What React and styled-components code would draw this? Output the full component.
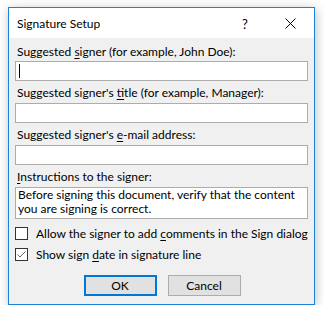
import React from "react";
import styled, { createGlobalStyle } from "styled-components";

const Global = createGlobalStyle`
  html, body { margin: 0; padding: 0; background: #ffffff; }
  body { font-family: Lato, "Noto Sans", sans-serif; font-size: 12px; color: #000; }
`;

const Dialog = styled.div`
  margin: 7px 0 0 8px;
  width: 307px;
  height: 298px;
  box-sizing: border-box;
  border: 1px solid #1a82d8;
  background: #f0f0f0;
  box-shadow: 1px 2px 10px rgba(0, 0, 0, 0.26);
  display: flex;
  flex-direction: column;
`;

const TitleBar = styled.div`
  height: 30px;
  background: #ffffff;
  display: flex;
  align-items: center;
  padding: 0 0 0 8px;
`;

const Title = styled.div`
  flex: 1;
  font-size: 12px;
  line-height: 16px;
  padding-top: 1px;
`;

const Help = styled.div`
  width: 12px;
  font-size: 13px;
  line-height: 16px;
  margin-right: 31px;
  padding-top: 1px;
`;

const CloseIcon = styled.svg`
  width: 11px;
  height: 11px;
  margin-right: 18px;
  margin-top: 1px;
`;

const Body = styled.div`
  padding: 6px 6px 0 6px;
  display: flex;
  flex-direction: column;
`;

const Label = styled.div`
  padding-left: 2px;
  line-height: 16px;
  margin-top: ${(p) => p.$mt || 0}px;
  white-space: nowrap;
`;

const U = styled.span`
  text-decoration: underline;
  text-underline-offset: 2px;
`;

const Input = styled.div`
  margin-top: ${(p) => p.$mt || 2}px;
  height: 20px;
  box-sizing: border-box;
  border: 1px solid #acacac;
  background: #ffffff;
  position: relative;
`;

const Caret = styled.div`
  position: absolute;
  left: 3px;
  top: 2px;
  width: 1px;
  height: 14px;
  background: #000;
`;

const TextArea = styled.div`
  margin-top: 2px;
  height: 32px;
  box-sizing: border-box;
  border: 1px solid #acacac;
  background: #ffffff;
  padding: 0 2px;
  line-height: 14px;
  font-size: 12px;
`;

const CheckRow = styled.div`
  display: flex;
  align-items: center;
  margin-top: 8px;
  height: 13px;
`;

const Box = styled.div`
  flex-shrink: 0;
  width: 13px;
  height: 13px;
  box-sizing: border-box;
  border: 1px solid #333333;
  background: #ffffff;
  display: flex;
  align-items: center;
  justify-content: center;
  margin-right: 8px;
`;

const CheckText = styled.div`
  line-height: 16px;
  white-space: nowrap;
`;

const Buttons = styled.div`
  display: flex;
  justify-content: center;
  gap: 11px;
  margin-top: 14px;
  padding-left: 1px;
`;

const Button = styled.div`
  width: 73px;
  height: 21px;
  box-sizing: border-box;
  background: #e1e1e1;
  border: ${(p) => (p.$primary ? "2px solid #0078d7" : "1px solid #adadad")};
  display: flex;
  align-items: center;
  justify-content: center;
  line-height: 16px;
`;

export default function App() {
  return (
    <>
      <Global />
      <Dialog>
        <TitleBar>
          <Title>Signature Setup</Title>
          <Help>?</Help>
          <CloseIcon viewBox="0 0 11 11">
            <path d="M0.5 0.5 L10.5 10.5 M10.5 0.5 L0.5 10.5" stroke="#000" strokeWidth="1" fill="none" />
          </CloseIcon>
        </TitleBar>
        <Body>
          <Label>
            Suggested <U>s</U>igner (for example, John Doe):
          </Label>
          <Input $mt={1}>
            <Caret />
          </Input>
          <Label $mt={4}>
            Suggested signer's <U>t</U>itle (for example, Manager):
          </Label>
          <Input />
          <Label $mt={4}>
            Suggested signer's <U>e</U>-mail address:
          </Label>
          <Input />
          <Label $mt={4}>
            <U>I</U>nstructions to the signer:
          </Label>
          <TextArea>
            Before signing this document, verify that the content you are signing is correct.
          </TextArea>
          <CheckRow>
            <Box />
            <CheckText>
              Allow the signer to add <U>c</U>omments in the Sign dialog
            </CheckText>
          </CheckRow>
          <CheckRow>
            <Box>
              <svg width="11" height="11" viewBox="0 0 11 11">
                <path d="M1.5 5.5 L4 8 L9.5 2.5" stroke="#666" strokeWidth="1" fill="none" />
              </svg>
            </Box>
            <CheckText>
              Show sign <U>d</U>ate in signature line
            </CheckText>
          </CheckRow>
          <Buttons>
            <Button $primary>OK</Button>
            <Button>Cancel</Button>
          </Buttons>
        </Body>
      </Dialog>
    </>
  );
}
